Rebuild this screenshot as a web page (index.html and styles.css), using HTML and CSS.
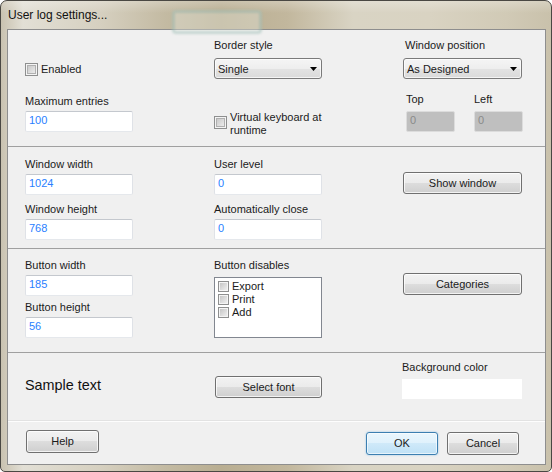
FILE: index.html
```html
<!DOCTYPE html>
<html>
<head>
<meta charset="utf-8">
<title>User log settings...</title>
<link rel="stylesheet" href="styles.css">
</head>
<body>
<div class="window">
  <div class="titlebar">
    <span class="ghost"></span>
    <span class="title">User log settings...</span>
  </div>
  <div class="client">
    <section class="sec s1">
      <div class="col c1">
        <div class="check enabled"><span class="cb"></span><span>Enabled</span></div>
        <div class="lbl max-lbl">Maximum entries</div>
        <div class="input">100</div>
      </div>
      <div class="col c2">
        <div class="lbl">Border style</div>
        <div class="combo"><span>Single</span><svg class="arrow" width="7" height="4" viewBox="0 0 7 4"><path d="M0 0H7L3.5 4Z" fill="#000"/></svg></div>
        <div class="check vk"><span class="cb"></span><span class="two">Virtual keyboard at<br>runtime</span></div>
      </div>
      <div class="col c3">
        <div class="lbl pl2">Window position</div>
        <div class="combo wide"><span>As Designed</span><svg class="arrow" width="7" height="4" viewBox="0 0 7 4"><path d="M0 0H7L3.5 4Z" fill="#000"/></svg></div>
        <div class="tl">
          <div class="tlf"><div class="lbl">Top</div><div class="input dis">0</div></div>
          <div class="tlf"><div class="lbl">Left</div><div class="input dis">0</div></div>
        </div>
      </div>
    </section>

    <section class="sec s2">
      <div class="col c1">
        <div class="lbl">Window width</div>
        <div class="input">1024</div>
        <div class="lbl second">Window height</div>
        <div class="input">768</div>
      </div>
      <div class="col c2">
        <div class="lbl">User level</div>
        <div class="input">0</div>
        <div class="lbl second">Automatically close</div>
        <div class="input">0</div>
      </div>
      <div class="col c3">
        <button class="btn wide-btn">Show window</button>
      </div>
    </section>

    <section class="sec s3">
      <div class="col c1">
        <div class="lbl">Button width</div>
        <div class="input">185</div>
        <div class="lbl second">Button height</div>
        <div class="input">56</div>
      </div>
      <div class="col c2">
        <div class="lbl">Button disables</div>
        <div class="list">
          <div class="li"><span class="cb sm"></span><span>Export</span></div>
          <div class="li"><span class="cb sm"></span><span>Print</span></div>
          <div class="li"><span class="cb sm"></span><span>Add</span></div>
        </div>
      </div>
      <div class="col c3">
        <button class="btn wide-btn">Categories</button>
      </div>
    </section>

    <section class="sec s4">
      <div class="col c1">
        <div class="sample">Sample text</div>
      </div>
      <div class="col c2">
        <button class="btn font-btn">Select font</button>
      </div>
      <div class="col c3">
        <div class="lbl">Background color</div>
        <div class="color-box"></div>
      </div>
    </section>

    <footer class="footer">
      <button class="btn help">Help</button>
      <button class="btn ok">OK</button>
      <button class="btn cancel">Cancel</button>
    </footer>
  </div>
</div>
</body>
</html>
```

FILE: styles.css
```css
* { box-sizing: border-box; }
html, body { margin: 0; padding: 0; }
body {
  width: 552px;
  height: 472px;
  overflow: hidden;
  background: #fff;
  font-family: "Liberation Sans", Arial, sans-serif;
  font-size: 11px;
  color: #1b1b1b;
}

.window {
  width: 552px;
  height: 472px;
  border: 1px solid #4a4843;
  border-radius: 7px 7px 5px 5px;
  background:
    linear-gradient(180deg, rgba(255,255,255,0.25) 0, rgba(255,255,255,0) 12px),
    linear-gradient(90deg, #c9c2b0 0%, #e2dfd5 4%, #d6d0c0 18%, #c3baa2 30%, #b9ae92 40%, #c2b79d 52%, #d9d4c4 64%, #d9d3c2 78%, #d1cab6 92%, #c9c1ab 100%);
  display: flex;
  flex-direction: column;
  overflow: hidden;
}

.titlebar {
  position: relative;
  height: 28px;
  flex: none;
  padding-left: 7px;
}
.ghost {
  position: absolute;
  left: 171px;
  top: 9px;
  width: 90px;
  height: 24px;
  border: 3px solid rgba(110, 160, 155, 0.30);
  border-radius: 4px;
  background: rgba(235, 238, 228, 0.35);
  filter: blur(1px);
}
.title {
  position: relative;
  display: block;
  font-size: 12px;
  line-height: 28px;
  color: #111;
}

.client {
  margin: 0 5px 0 6px;
  height: 436px;
  flex: none;
  border: 1px solid #8e8e8e;
  background: #f0f0f0;
  display: flex;
  flex-direction: column;
}

.sec {
  display: grid;
  grid-template-columns: 189px 189px 119px;
  padding-left: 17px;
  flex: none;
}
.s1 { height: 116px; }
.s2 { height: 102px; border-top: 1px solid #a0a0a0; }
.s3 { height: 104px; border-top: 1px solid #a0a0a0; }
.s4 { height: 69px; border-top: 1px solid #a0a0a0; }

.col {
  display: flex;
  flex-direction: column;
  align-items: flex-start;
}

.lbl {
  height: 13px;
  line-height: 13px;
  white-space: nowrap;
}
.pl2 { padding-left: 2px; }

.input {
  width: 108px;
  height: 21px;
  margin-top: 3px;
  border: 1px solid;
  border-color: #c4c8ce #dfe2e7 #e5e8ec #dfe2e7;
  border-radius: 2px;
  background: #fff;
  color: #2a80ff;
  padding-left: 3px;
  line-height: 17px;
}
.input.dis {
  width: 49px;
  margin-top: 5px;
  background: #bfbfbf;
  border-color: #dcdcdc;
  color: #8a8a8a;
}

.check {
  display: flex;
  align-items: flex-start;
  gap: 3px;
  line-height: 13px;
}
.cb {
  flex: none;
  width: 13px;
  height: 13px;
  border: 1px solid #8e8f8f;
  background: linear-gradient(135deg, #c0c0c0 0%, #dddddd 55%, #f4f4f4 100%);
  box-shadow: inset 0 0 0 1px #f4f4f4, inset 0 0 0 2px #b0b0b0;
}
.cb.sm {
  width: 11px;
  height: 11px;
  box-shadow: inset 0 0 0 1px #f4f4f4;
}

/* section 1 */
.s1 .c1 { padding-top: 33px; }
.enabled { height: 13px; }
.max-lbl { margin-top: 19px; }
.s1 .c2, .s1 .c3 { padding-top: 9px; }

.combo {
  width: 108px;
  height: 21px;
  margin-top: 6px;
  border: 1px solid #7a7a7a;
  border-radius: 3px;
  background: linear-gradient(180deg, #f5f5f5 0%, #eeeeee 50%, #e3e3e3 50%, #dadada 100%);
  box-shadow: inset 0 0 0 1px rgba(255,255,255,0.7);
  display: flex;
  align-items: center;
  justify-content: space-between;
  padding: 0 4px 0 3px;
  white-space: nowrap;
}
.combo.wide { width: 119px; }
.arrow { flex: none; display: block; }

.vk { margin-top: 32px; }
.vk .cb { margin-top: 5px; }
.two { line-height: 12.5px; }

.tl {
  display: grid;
  grid-template-columns: 49px 49px;
  column-gap: 19px;
  margin-left: 3px;
  margin-top: 14px;
}
.tlf {
  display: flex;
  flex-direction: column;
}

/* section 2 */
.s2 .c1, .s2 .c2 { padding-top: 11px; }
.s2 .second { margin-top: 8px; }
.s2 .c3 { padding-top: 25px; }

/* section 3 */
.s3 .c1, .s3 .c2 { padding-top: 10px; }
.s3 .second { margin-top: 5px; }
.s3 .c3 { padding-top: 24px; }

.list {
  width: 108px;
  height: 61px;
  margin-top: 5px;
  border: 1px solid #828790;
  background: #fff;
  padding: 2px 0 0 3px;
}
.li {
  display: flex;
  align-items: center;
  gap: 3px;
  height: 13px;
  line-height: 13px;
}

/* buttons */
.btn {
  margin: 0;
  padding: 0;
  height: 22px;
  border: 1px solid #707070;
  border-radius: 3px;
  background: linear-gradient(180deg, #f2f2f2 0%, #ebebeb 49%, #dddddd 50%, #cfcfcf 100%);
  box-shadow: inset 0 0 0 1px rgba(255,255,255,0.75);
  font-family: "Liberation Sans", Arial, sans-serif;
  font-size: 11px;
  color: #1b1b1b;
  line-height: 20px;
  text-align: center;
  cursor: default;
}
.wide-btn { width: 119px; }

/* section 4 */
.s4 .c1 { padding-top: 24px; }
.sample {
  font-size: 14.4px;
  line-height: 17px;
  color: #111;
  white-space: nowrap;
}
.s4 .c2 { padding-top: 23px; }
.font-btn { width: 107px; margin-left: 1px; }
.s4 .c3 { padding-top: 8px; margin-left: -1px; }
.color-box {
  width: 120px;
  height: 20px;
  margin-top: 5px;
  background: #fff;
}

/* footer */
.footer {
  flex: none;
  height: 43px;
  border-top: 1px solid #fdfdfd;
  box-shadow: 0 -1px 0 #e2e2e2;
  display: flex;
  align-items: flex-start;
  padding: 8px 26px 0 18px;
}
.help { width: 73px; height: 23px; line-height: 21px; }
.ok {
  width: 72px;
  height: 23px;
  line-height: 21px;
  margin-left: auto;
  margin-top: 2px;
  border-color: #3c7fb1;
  background: linear-gradient(180deg, #eaf6fd 0%, #dff1fc 49%, #cfe9f9 50%, #bfe1f6 100%);
  box-shadow: inset 0 0 0 1px rgba(255,255,255,0.6), 0 0 2px rgba(98,177,229,0.7);
}
.cancel {
  width: 72px;
  height: 23px;
  line-height: 21px;
  margin-left: 9px;
  margin-top: 2px;
}
```
